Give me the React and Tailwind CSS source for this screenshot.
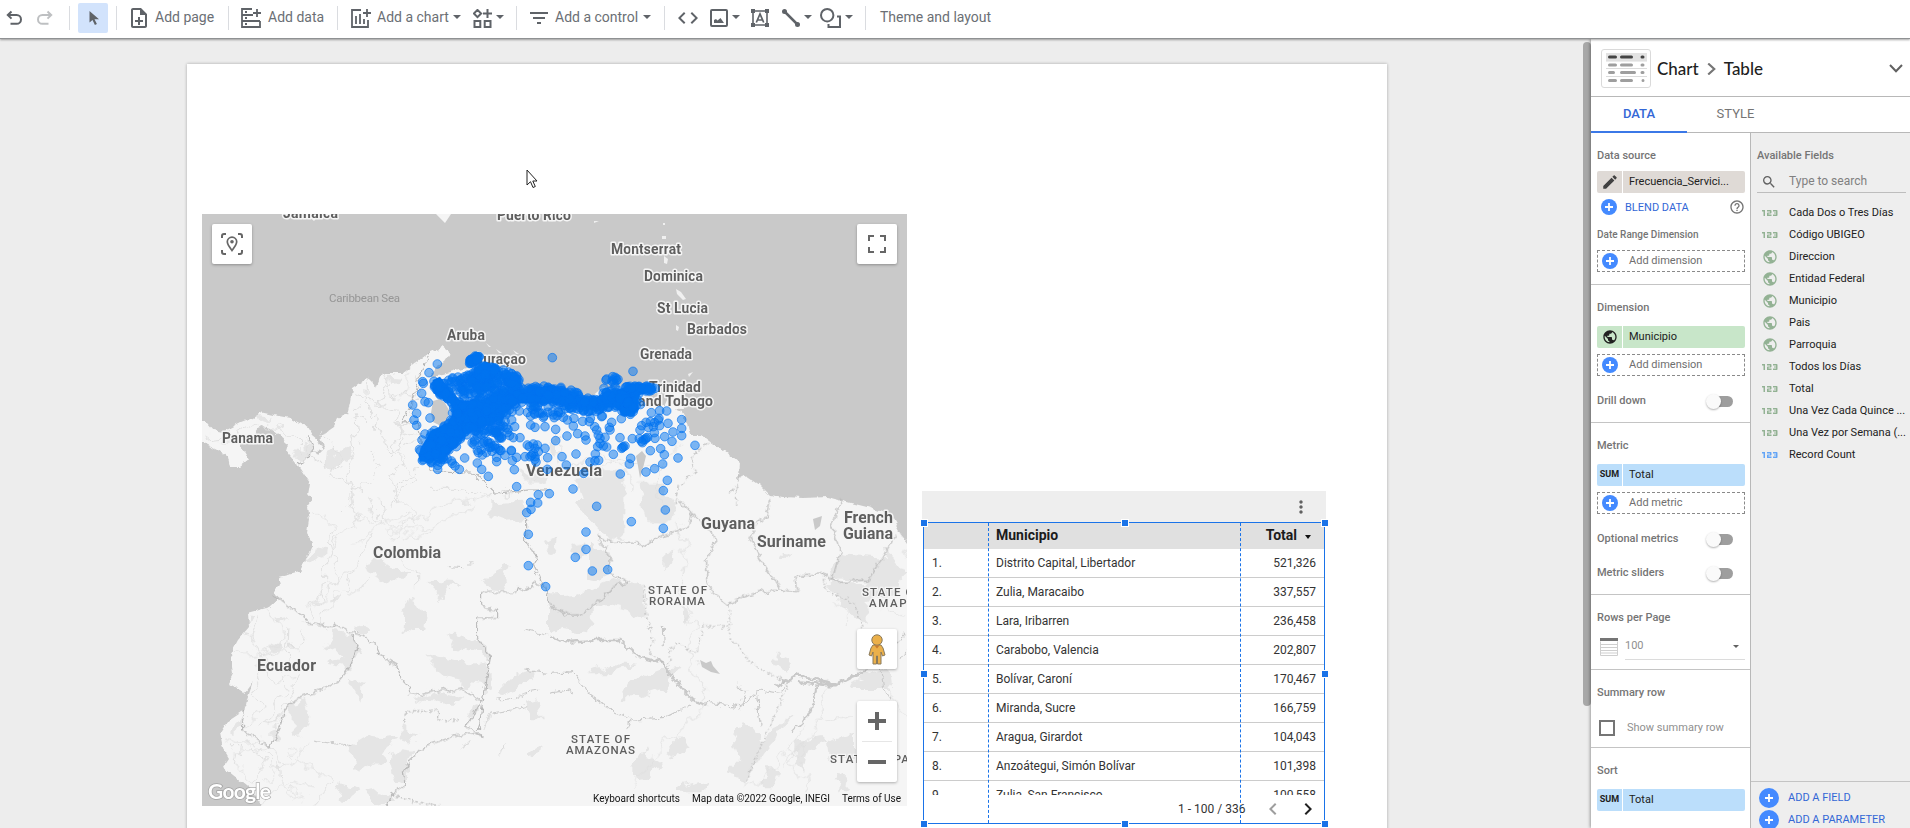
import React from "react";
import { MdEdit, MdPublic, MdHelpOutline, MdSearch, MdFilterList, Md123, MdMoreVert, MdChevronLeft, MdChevronRight, MdCode, MdOutlineNoteAdd } from "react-icons/md";

const ICON = "#5f6368";

/* ---------- Toolbar ---------- */

function Sep({ className = "" }) {
  return <span className={"h-6 w-px shrink-0 bg-[#dadce0] " + className} />;
}

function Caret({ className = "" }) {
  return (
    <svg className={"-mt-[3px] h-1 w-2 shrink-0 " + className} viewBox="0 0 8 4">
      <path d="M0 0h8L4 4z" fill={ICON} />
    </svg>
  );
}

function ToolLabel({ className, children }) {
  return <span className={"shrink-0 pb-[2px] whitespace-nowrap text-[14px] leading-5 text-[#6b6f75] " + className}>{children}</span>;
}

function Svg({ className, viewBox, children }) {
  return (
    <svg className={"shrink-0 " + className} viewBox={viewBox} fill="none" stroke={ICON} strokeWidth="2">
      {children}
    </svg>
  );
}

function Toolbar() {
  return (
    <header className="relative z-20 flex h-[39px] shrink-0 items-start border-b border-[#8f9193] bg-white shadow-[0_1px_2px_rgba(0,0,0,0.35)]">
      <div className="flex h-9 w-full items-center">
        <Svg className="ml-[6px] h-4 w-4" viewBox="0 0 16 16">
          <path d="M5.500 1.500 1.800 5l3.700 3.600M2 5h8.600a4.300 4.300 0 0 1 0 8.800H4.500" />
        </Svg>
        <Svg className="ml-[15px] h-4 w-4 opacity-40" viewBox="0 0 16 16">
          <path d="M10.500 1.500 14.200 5l-3.700 3.600M14 5H5.400a4.300 4.300 0 0 0 0 8.800h6.100" />
        </Svg>
        <Sep className="ml-4" />
        <span className="ml-2 flex h-[30px] w-[30px] shrink-0 items-center justify-center rounded-[2px] bg-[#d2e3fc]">
          <svg className="ml-[2px] h-4 w-[10px]" viewBox="0 0 10 16">
            <path d="M.5 1v11.600l3-2.600 2.400 5 2-.9-2.400-4.900H10z" fill={ICON} />
          </svg>
        </span>
        <Sep className="ml-2" />
        <MdOutlineNoteAdd className="ml-[10px] h-6 w-6 shrink-0 text-[#5f6368]" />
        <ToolLabel className="ml-1 w-[73px]">Add page</ToolLabel>
        <Sep />
        <Svg className="ml-[12px] h-5 w-5" viewBox="0 0 20 20">
          <path d="M11 1H1v18h18v-6M1 7h11M1 13h18M16 1v8M12 5h8M4 4h2M4 10h2M4 16h2" strokeWidth="1.800" />
        </Svg>
        <ToolLabel className="ml-[7px] w-[69px]">Add data</ToolLabel>
        <Sep />
        <Svg className="ml-[13px] h-5 w-5" viewBox="0 0 20 20">
          <path d="M10 2H1v17h16v-7M5 8v8M9 6v10M13 11v5M16 1v8M12 5h8" strokeWidth="1.800" />
        </Svg>
        <ToolLabel className="ml-[6px] w-[76px]">Add a chart</ToolLabel>
        <Caret />
        <Svg className="ml-[12px] h-[19px] w-[19px]" viewBox="0 0 19 19">
          <path d="M4.500.9 8.100 4.500 4.500 8.100.9 4.500zM14.500 0v9M10 4.500h9M1.500 12h5.800v6H1.500zM11.700 12h5.800v6h-5.800z" />
        </Svg>
        <Caret className="ml-1" />
        <Sep className="ml-[12px]" />
        <MdFilterList className="ml-[10px] h-6 w-6 shrink-0 text-[#5f6368]" />
        <ToolLabel className="ml-1 w-[88px]">Add a control</ToolLabel>
        <Caret />
        <Sep className="ml-[13px]" />
        <MdCode className="ml-[11px] h-6 w-6 shrink-0 text-[#5f6368]" />
        <Svg className="ml-[10px] h-[18px] w-[18px]" viewBox="0 0 18 18">
          <rect x="1" y="1" width="16" height="16" rx="1" />
          <path d="M4 14v-3l2-1 1.500 1.500L10.500 9l3.500 5z" fill={ICON} stroke="none" />
        </Svg>
        <Caret className="ml-1" />
        <Svg className="ml-[11px] h-[18px] w-[18px]" viewBox="0 0 18 18">
          <path d="M2 2h14v14H2z" strokeWidth="1.600" />
          <path d="M0 0h4v4H0zM14 0h4v4h-4zM0 14h4v4H0zM14 14h4v4h-4z" fill={ICON} stroke="none" />
          <path d="M5.300 13.500 9 4.800l3.700 8.700M6.500 11h5" strokeWidth="1.700" />
        </Svg>
        <Svg className="ml-[13px] h-[18px] w-[18px]" viewBox="0 0 18 18">
          <path d="m2.500 2.500 13 13" strokeWidth="2.500" />
          <circle cx="2.500" cy="2.500" r="2.500" fill={ICON} stroke="none" />
          <circle cx="15.500" cy="15.500" r="2.500" fill={ICON} stroke="none" />
        </Svg>
        <Caret className="ml-1" />
        <Svg className="ml-2 h-5 w-[21px]" viewBox="0 0 21 20">
          <circle cx="7.200" cy="7.200" r="6.200" />
          <path d="M17 8.500h3V19H8.500v-3" />
        </Svg>
        <Caret className="ml-1" />
        <Sep className="ml-3" />
        <ToolLabel className="ml-[14px]">Theme and layout</ToolLabel>
      </div>
    </header>
  );
}

/* ---------- Map ---------- */

const LAND =
  "M195 423 207 423 213 430 223 432 240 423 253 418 260 412 273 415 290 418 307 427 312 435 318 440 323 450 316 451 311 444 318 455 325 448 320 437 333 428 338 418 347 415 350 402 352 388 367 378 372 383 377 387 383 373 403 373 430 352 442 347 451 353 445 362 435 368 430 377 443 375 467 368 473 358 480 358 490 368 510 368 520 382 518 391 530 388 550 385 570 393 590 398 603 387 617 387 637 385 660 387 650 392 637 405 665 405 682 413 687 422 690 435 702 435 710 441 727 453 739 463 738 477 745 475 760 485 770 495 783 497 803 498 827 497 843 501 867 507 883 512 893 520 900 533 907 543 915 548 915 815 262 815 262 806 252 790 233 775 223 767 229 758 223 748 220 733 227 722 245 710 247 700 253 682 245 693 228 683 233 673 230 655 238 640 249 627 248 613 270 607 280 598 273 593 281 585 279 577 300 572 307 557 313 543 307 533 309 520 307 507 312 500 308 495 310 483 300 468 295 462 285 450 287 443 278 435 270 428 260 425 253 435 245 438 240 445 249 460 240 467 229 467 227 457 217 450 203 443 195 443z";

/* Isolated places, in thirds of a pixel from the north-west corner of the bubble layer */
const PLACES = [
  [112,72],[87,98],[68,125],[70,130],[65,160],[75,185],[85,188],[38,195],[50,220],[42,240],[50,256],[90,234],[75,282],[66,300],
  [457,53],[699,94],[845,239],[845,265],[845,287],[819,276],[816,304],[794,290],[885,316],[834,354],[788,372],[793,344],[782,326],[751,332],[738,396],[764,386],[802,421],[790,452],[796,510],[790,565],[694,545],[590,499],[661,402],[519,447],[558,576],[558,628],[526,652],[577,693],[623,689],[437,740],[385,677],[385,583],[380,518],[393,508],[413,489],[392,487],[415,464],[448,461],[350,440],[265,409],[245,388],[232,369],[194,354],[178,388],[165,378],[157,370],[113,388],[113,376],[343,389],[337,362],[350,352],[334,331],[340,293],[360,293],[344,260],[358,213],[335,240],[235,338],[247,345],[222,313],[272,322],[290,365],[290,352],[303,332],[315,346],[276,334],[268,322],[300,293],[270,270],[288,278],[318,262],
  [375,350],[388,320],[400,312],[405,325],[400,340],[405,350],[415,335],[435,325],[390,350],[408,366],[395,346],[412,315],[405,358],[382,315],[334,333],[443,353],[442,388],[486,350],[499,375],[528,342],[551,400],[501,288],[467,302],[467,268],[435,260],[405,262],[392,255],[392,228],[430,232],[460,225],[490,232],[502,240],[522,235],[520,258],[548,244],[533,281],[555,288],[558,300],[568,245],[571,235],
  [590,270],[595,285],[600,295],[615,292],[593,320],[610,318],[620,321],[586,342],[585,362],[570,366],[596,361],[640,343],[665,325],[670,320],[675,318],[668,322],[692,355],[688,372],[660,293],[630,270],[635,247],[628,262],[605,230],[607,228],[664,236],[697,296],[718,296],[725,304],[731,300],[736,298],[738,294],[727,308],[743,292],[765,295],[763,278],[725,257],[738,247],[751,245],[764,248],[775,240],[779,212],[800,213],[754,218],[804,250],[779,257],[777,235],[745,262],[760,260],[640,120],[648,115],[642,128],[650,122],[645,112],[636,124],[654,118],[620,117],[618,120],[638,110],[612,145],[618,158],[645,140],[711,178],[720,270],[584,260],[600,310],
  [285,130],[205,139],[165,125],[180,120],[150,128],[310,90],[320,104],[300,120],[190,165],[230,140],[215,125],
];

/* Crowded regions: x1, y1, x2, y2, spread, number of places */
const CROWDS = [
  [72,345,130,300,22,70],[125,300,200,220,48,170],[200,240,330,175,46,220],[115,130,145,180,20,60],
  [330,165,430,165,26,90],[430,158,520,175,26,110],[520,190,600,200,22,70],[600,180,700,175,30,105],
  [682,144,765,146,8,36],[683,205,690,200,20,50],[212,66,232,54,9,36],[160,135,330,120,34,125],
  [240,98,280,90,18,70],[335,115,345,125,16,40],[105,355,150,345,20,24],[210,290,310,260,38,50],
  [390,212,520,215,20,26],[245,300,280,320,36,10],
];

function buildCrowds() {
  let seed = 20221;
  const rnd = () => {
    seed = (seed * 16807) % 2147483647;
    return seed / 2147483647;
  };
  const out = [];
  CROWDS.forEach(([x1, y1, x2, y2, s, n]) => {
    for (let i = 0; i < n; i++) {
      const t = rnd();
      const a = rnd() * Math.PI * 2;
      const r = Math.sqrt(rnd()) * s;
      const x = x1 + (x2 - x1) * t + Math.cos(a) * r;
      const y = y1 + (y2 - y1) * t + Math.sin(a) * r;
      if (Math.hypot(x - 110, y - 212) > 48) out.push([x, y]);
    }
  });
  return out;
}
const CROWD_POINTS = buildCrowds();

function Dot({ p }) {
  return <circle cx={p[0]} cy={p[1]} r="13" />;
}

function Place({ x, y, w, size = 14, children }) {
  return (
    <text x={x} y={y} fontSize={size} fontWeight="700" textLength={w} fill="#5e5e5e" stroke="#f5f5f5" strokeWidth="3" strokeLinejoin="round" paintOrder="stroke">
      {children}
    </text>
  );
}

function Region({ x, y, w, children }) {
  return (
    <text x={x} y={y} fontSize="11.500" fontWeight="500" textLength={w} fill="#5e5e5e" stroke="#f5f5f5" strokeWidth="2.500" paintOrder="stroke">
      {children}
    </text>
  );
}

function Rough({ id, freq, scale }) {
  return (
    <filter id={id} filterUnits="userSpaceOnUse" x="202" y="214" width="705" height="592" colorInterpolationFilters="sRGB">
      <feTurbulence type="fractalNoise" baseFrequency={freq} numOctaves="3" seed="7" />
      <feDisplacementMap in="SourceGraphic" scale={scale} xChannelSelector="R" yChannelSelector="G" />
    </filter>
  );
}

function MapDrawing() {
  return (
    <svg className="block h-full w-full" viewBox="202 214 705 592" fontFamily="Roboto, sans-serif">
      <defs>
        <Rough id="coast" freq="0.12" scale="6" />
        <Rough id="patch" freq="0.07" scale="16" />
        <Rough id="road" freq="0.06" scale="24" />
        <Rough id="border" freq="0.14" scale="8" />
      </defs>
      <rect x="202" y="214" width="705" height="592" fill="#c9c9c9" />
      <g filter="url(#coast)">
        <path d={LAND} fill="#f5f5f5" />
        <path d="M665 390 682 388 684 410 664 409 668 400z" fill="#f5f5f5" />
      </g>
      <path d="M436 214h15l-6 9zM306 214h14l-6 7z" fill="#f5f5f5" />
      <path
        d="m664 256 4 3-1 5-3-1zM676 289l5 3 5 7-3 1-6-6zM676 325l3 2-1 4-2-1zM688 374l5-2-4 5zM594 221l5 0-5 2zM663 223h2v2h-2zM662 236h4v3h-4zM640 229l3 1zM486 343l5 4-2 0zM496 349l6 4-3 0zM513 350l6 4-3 0zM582 381l4 1z"
        fill="#f0f0f0"
      />

      {/* Forest and reserve patches */}
      <g fill="#e5e5e5" filter="url(#patch)">
        <g transform="translate(190 205) scale(.33333)">
          <path d="m410 745 20-15 15 15 35-10 12 25-35 10-25 25-25-10zM590 515l60 3-20 18-35 5zM295 735l40 5 25-30 10 25-30 30-30-5zM205 630l40 5-35 20zM510 705l10 5-5 8z" />
        </g>
        <g transform="translate(190 500) scale(.33333)">
          <path d="M895 10 1000 5 1012 60 950 65 895 45zM530 190l50-12 10 20 70 22-60 25-60-25zM712 242l95 4-50 54zM640 340l15-50 20 10 15 30 18 10-5 50-35 0-30-5zM890 225l60-30-12 30 10 55-45-3-20-30zM365 145l40 5-5 35-40-10zM775 395l70 25 50 20 10 35-60-15-50-15zM712 460l60 15 70 15 60-10 0 80-90-10-70-15zM480 380l40-15 25 30-50 5zM430 395l55 10 20 50-25 50-70-15 50-20-15-35-45 20 20-30zM470 530l50 20-2 55-25-40zM665 595l90-25 65 20-25 25-100-15zM305 610l40-10 20 60-30 45-30 5zM480 740l60-35 60 5 30-5-50 70-90 38zM600 780l25-35 38 5-20 80-25 15zM635 685l50 15-20 30-30-12zM920 580l60-60 50-10-50 60-50 18zM1005 605l40-10 10 60-25 0zM1015 760l40-25-5 25-30 15zM450 850l50 15-40 50-20-10zM520 880l60-10 30 40-30 8-30-8zM120 690l45-45-5 25-35 30zM180 350h20l-10 30zM255 350l30-5-10 25zM235 440l30-15-5 30-25 5zM420 310l35-25-15 25zM840 610l25 15-15 30-15-10zM245 690l25-5-5 25-22 5z" />
        </g>
        <g transform="translate(550 500) scale(.33333)">
          <path d="M75 0 130 0 215 20 220 110 165 110 125 70 80 20zM270-10h90l30 40-50 40-45-40zM120 130l60 20 5 60-25 30-40-10zM0 290l80-5 110-45 90 20 10 90-100-30-60 5-10 75-80-10-40 10zM210 560l100-45 85-15-50 65-80 30-50 0zM120 520l60-25 80 5-80 20zM340 760l50-55 35 35-50 35zM250 800l30-45 50 30-40 45-40 5zM580 660l50 60 100-70-80 100-60 90-65-20 40-40-20-50zM670 490l15-45 25 35 5 30-25 10zM740 720l60-15 30 25-50 20-15 65-30-30zM830 720l85-25 0 75-80 0zM860 810l40 50-20 15-35-40zM640 805l45 0-10 60-30 0zM390 860l80-20-10 40-70-5zM830 260l20-20 90 10 70-80 0-20 60 80-60 60-60 10 0 90-60-60zM845 210l30-50 130 10 5 20-50 50-110-5zM900 540l110-40 10 70-110 0zM340 160l25-5 5 30-30 35zM390 330l30 5-15 40zM690 160l25 5-15 15z" />
        </g>
        <g transform="translate(400 340) scale(.33333)">
          <path d="M345 390l40 20 30-10 30 10-20 20-55 0zM445 290l30 0-5 50-20 0zM525 415l80-25 65 0 0 190-40 30-60-70zM715 430l60 0 60 90-20 30-70-5zM430 600l40-5-5 35-15 5zM515 610l40-5 5 35-30 15z" />
        </g>
      </g>

      {/* Roads */}
      <g fill="none" stroke="#dfdfdf" strokeWidth="3" strokeLinejoin="round" filter="url(#road)">
        <g transform="translate(190 205) scale(.33333)">
          <path d="m50 700 90-10 60-30 60 10 40 20 40 50M490 560l35 10 45 30 20-50 25-30M530 530l-5 60 40 60 10 60 60 30 60-40M580 510l25 60 60 10 40-60M555 600l60 10 20 60 60 30M690 520l-30 80-20 80-50 60M510 600l-20 80 10 60-30 60 20 100M540 740l30 50-60 60-60 50M575 700l60 60-30 60 20 70M690 560l-40 90-15 30M640 690l-20 70 60 60-70 60M690 780l-60 50-40 70M400 690l50 60-20 60 60 40-10 50M720 850l90 0 200 20M480 640l60 10M350 700l15 60 50 40" />
        </g>
        <g transform="translate(190 500) scale(.33333)">
          <path d="M480 0l30 60-70 50-30 80 0 70-60 80M370 30l60 50-10 60M570 0l10 70 60 30 90-20 120-70M530 110l-40 100-90 60-50 90M580 80l-60-30-50 40M620 0l60 40-60 70M540 0l30 70-70 60M580 70l70-20 30 30M450 110l-30 60 30 50-30 60-80 60M500 200l-40 80-60 50 10 60M230 330l60 80-90 50-70 5M200 350l-20 60 40 70-25 70M345 390l-20 60-100 0M300 390l-15 180-60 100M320 520l-40 120-70 40M200 470l60 70 50-10M190 560l20 60-50 60M210 680l80-40M110 710l60 20 60-10 50 70-60 60M140 730l-10 60 60 60 30-50-40-80M200 720l50 90 50-30 60-60M260 780l10 60 70 60M130 750l100 0M300 770l60 40 70 30-50 70M220 900l80-50 60 10M540 220l-20 40-60 30M640 180l40 40 0 40" />
        </g>
        <g transform="translate(550 500) scale(.33333)">
          <path d="M380 60l30 120-20 100 40 90-10 80 40 100 0 60M830 550l-20 120-40 60-80 80M1071 640l-60-60M770 680l-130 150-70 30M700 740l60 100 10 70M480 620l-130 100-100 150M820 670l80-20M860 310l40 60M1000 330l71 20M1050 100l20 60" />
        </g>
        <g transform="translate(400 340) scale(.33333)">
          <path d="M0 560 120 500 270 460M0 600l100-30M30 100l-30 80M390 420l130-40 130-20 140 20M420 330l20 90M480 280v80M590 330l100 60 0 80M850 300l-80 80 0 120" />
        </g>
      </g>

      {/* Rivers and lakes */}
      <g fill="none" stroke="#c9c9c9" strokeWidth="3.500" filter="url(#border)">
        <g transform="translate(550 500) scale(.33333)">
          <path d="M210 418l50 50 80 22 40 60 50 50 40 15M0 410l60 15 80-5 70 0" strokeWidth="7" />
          <path d="M680 560l60-35 90 20 30 8 40-20 50-20M750 545l80 10 30 0" strokeWidth="9" />
          <path d="M800 555l-15 80-60 60" strokeWidth="6" />
          <path d="M0 520l70-5 50 70 70 50 60 25 90-5 80-40M470 610l100 10 60-50 60 10 50-60M560 555l30 15-20 60M990 500l10 60 20 40M620 590l10 80M230 690l10-30M0 580l50-10 20 10M340 380l3 60M1040 430l30-30M1050 480l20-30" />
        </g>
        <g transform="translate(190 500) scale(.33333)" strokeWidth="3">
          <path d="M370 720l110 20M775 200l50 3M845 180l-5 15M920 600l60-5 30-20 40-5M880 690l20-50 60-10 50-10M815 745l25-25M925 770l20-40M1000 390l70 15M1000 510l70 10" />
        </g>
      </g>
      <path d="m700 660 6 3 5-2 2 5 7 8-9-2-9-5zM636 456l6-5 4 5-3 12-3 10-2-12zM813 519l9-3-2 10-5 4z" fill="#c9c9c9" />
      <path d="m433 401 7-2 5 4 4 7-1 7-3 6-6 2-6-3-2-9z" fill="#c9c9c9" />

      {/* Country borders */}
      <g fill="none" stroke="#b4b4b4" strokeWidth="3.200" strokeLinejoin="round" filter="url(#border)">
        <g transform="translate(190 205) scale(.33333)">
          <path d="M720 440l-35 80-20 80-30 50 50 0 10 70 30 80 130 5 60 60 100-10 60 0M360 690l10 50-30 30-20 10" />
        </g>
        <g transform="translate(190 500) scale(.33333)">
          <path d="M250 285l60 45 40 25 5 15 70 10 10-12 45 30 40 8 40 35 10 25 50 30 15 40 20 20 5 25 30 5 70-20 20 10 40-8 55 35-45 75 50 30-30-10-60 10-60 20-25 15-45 35-20 40 5 35-40 30-15 45M485 405l18 40-25 60-30 35-50 30-85 28-30 35-10 40-35 70-40-30-40-20 0-30 10-40M1010 60l0 70 30 35-10 30 35 70 10 50M875 320l45 10 0 22-60 3 0 55 42 60-37 220M875 320v-43h105l5-15 20 10 30-25 30 10" />
          <path d="M605 880l60 22 80 15M640 670l10-35 50 0 40-8 10 30 60 5" strokeDasharray="8 5" />
        </g>
        <g transform="translate(550 500) scale(.33333)">
          <path d="M0 315l50 30 40 0 60-45 40-40 45-15-55-25 0-50-40-65 50 25 70-5 20 15 50-30 70-20 20-20 5-30-40-40M425 40l60 50 10 40-25 50 0 60 20 40 45 35 40-25 60-15 50-5 60 5M690 265l-60-90-30-60 20-50 30-10 10-50M740 270l-5-40 80-10 40 25 100-5 80-130M845 245l25-90-25-80 30-80" />
          <path d="M538 315v75l15 40 50 60 90 50 20 20-125 280M355 500l5-50 20-20 20 5 15 20 25 0 20-75h80M280 255l15 110 15 60-15 30 50 40M820 220l10 50 80 40 20 40 10 60" strokeDasharray="7 7" />
        </g>
        <g transform="translate(550 205) scale(.33333)">
          <path d="M475 715l-50 35 10 50-50 40-10 60M565 815l-5 30-25 25M560 850l0 50M660 880l-5 20" strokeDasharray="14 8" />
        </g>
      </g>

      <text x="329" y="302" fontSize="11.500" textLength="71" fill="#969696">Caribbean Sea</text>
      <Place x={283} y={218} w={55}>Jamaica</Place>
      <Place x={497} y={220} w={74}>Puerto Rico</Place>
      <Place x={611} y={254} w={70}>Montserrat</Place>
      <Place x={644} y={281} w={59}>Dominica</Place>
      <Place x={657} y={313} w={51}>St Lucia</Place>
      <Place x={687} y={334} w={60}>Barbados</Place>
      <Place x={640} y={359} w={52}>Grenada</Place>
      <Place x={649} y={392} w={52}>Trinidad</Place>
      <Place x={638} y={406} w={75}>and Tobago</Place>
      <Place x={447} y={340} w={38}>Aruba</Place>
      <Place x={474} y={364} w={52}>Curaçao</Place>
      <Place x={222} y={443} w={51}>Panama</Place>
      <Place x={526} y={476} w={76} size={16}>Venezuela</Place>
      <Place x={373} y={558} w={68} size={16}>Colombia</Place>
      <Place x={257} y={671} w={59} size={16}>Ecuador</Place>
      <Place x={701} y={529} w={54} size={16}>Guyana</Place>
      <Place x={757} y={547} w={69} size={16}>Suriname</Place>
      <Place x={844} y={523} w={49} size={16}>French</Place>
      <Place x={843} y={539} w={50} size={16}>Guiana</Place>
      <Region x={648} y={594} w={59}>STATE OF</Region>
      <Region x={649} y={605} w={56}>RORAIMA</Region>
      <Region x={571} y={743} w={59}>STATE OF</Region>
      <Region x={566} y={754} w={69}>AMAZONAS</Region>
      <Region x={862} y={596} w={59}>STATE OF</Region>
      <Region x={869} y={607} w={46}>AMAPÁ</Region>
      <Region x={830} y={763} w={96}>STATE OF PARÁ</Region>

      <g transform="translate(400 340) scale(.33333)">
        <path
          d="M55 345 65 320 95 270 145 250 162 215 150 190 100 160 98 120 120 110 150 150 180 180 240 185 300 165 340 145 400 150 445 135 500 150 530 170 570 180 610 162 680 142 700 130 765 137 768 153 720 165 708 210 670 220 640 198 570 205 500 190 420 190 330 190 310 235 230 270 200 280 150 340 100 362 60 365z"
          fill="#0073f0"
        />
        <g fill="#0073f0" fillOpacity=".5" stroke="#0073f0" strokeOpacity=".75" strokeWidth="2.500">
          {CROWD_POINTS.map((p, i) => (
            <Dot key={i} p={p} />
          ))}
          {PLACES.map((p, i) => (
            <Dot key={i} p={p} />
          ))}
        </g>
      </g>

      <rect x="590" y="792" width="317" height="14" fill="#f5f5f5" fillOpacity=".7" />
      <g fontSize="10" fill="#111">
        <text x="593" y="802" textLength="87">Keyboard shortcuts</text>
        <text x="692" y="802" textLength="138">Map data ©2022 Google, INEGI</text>
        <text x="842" y="802" textLength="59">Terms of Use</text>
      </g>
      <text x="208" y="799" fontFamily="Lato, sans-serif" fontSize="21" fontWeight="700" textLength="63" fill="#fff" stroke="#8d8d8d" strokeOpacity=".65" strokeWidth="1.500" paintOrder="stroke">
        Google
      </text>
    </svg>
  );
}

const mapButton = "absolute flex h-10 w-10 items-center justify-center rounded-[2px] bg-white shadow-[0_1px_3px_rgba(0,0,0,0.3)]";

function MapChart() {
  return (
    <section className="relative mt-[150px] ml-[15px] h-[592px] w-[705px] shrink-0 overflow-hidden">
      <MapDrawing />
      <div className={mapButton + " top-[10px] left-[10px]"}>
        <svg className="h-[22px] w-[22px]" viewBox="0 0 22 22" fill="none" stroke="#666" strokeWidth="2">
          <path d="M1 5V3a2 2 0 0 1 2-2h2M17 1h2a2 2 0 0 1 2 2v2M21 17v2a2 2 0 0 1-2 2h-2M5 21H3a2 2 0 0 1-2-2v-2" />
          <path d="M11 17.500C8 13.500 6.300 11.500 6.300 8.800a4.700 4.700 0 0 1 9.400 0c0 2.700-1.700 4.700-4.700 8.700z" strokeWidth="1.700" />
          <circle cx="11" cy="8.800" r="1.800" fill="#666" stroke="none" />
        </svg>
      </div>
      <div className={mapButton + " top-[10px] right-[10px]"}>
        <svg className="h-[18px] w-[18px]" viewBox="0 0 18 18" fill="none" stroke="#666" strokeWidth="2">
          <path d="M1 6V1h5M12 1h5v5M17 12v5h-5M6 17H1v-5" />
        </svg>
      </div>
      <div className={mapButton + " top-[415px] right-[10px]"}>
        <svg className="h-[31px] w-[18px]" viewBox="0 0 18 31" fill="#ebb04a" stroke="#8a7a5c" strokeWidth="1">
          <path d="M5 11h8l2 3 2 7-2.500 1L13 18v12H9.500v-8h-1v8H5V18l-1.500 4L1 21l2-7z" />
          <circle cx="9" cy="6" r="5.200" />
          <path d="m6.500 11.500 2.500 3 2.500-3z" fill="#c77b30" stroke="none" />
        </svg>
      </div>
      <div className="absolute top-[487px] right-[10px] flex h-[81px] w-10 flex-col items-center rounded-[2px] bg-white shadow-[0_1px_3px_rgba(0,0,0,0.3)]">
        <div className="flex h-10 items-center">
          <svg className="h-[18px] w-[18px]" viewBox="0 0 18 18">
            <path d="M7 0h4v7h7v4h-7v7H7v-7H0V7h7z" fill="#666" />
          </svg>
        </div>
        <div className="h-px w-[30px] bg-[#e6e6e6]" />
        <div className="flex h-10 items-center">
          <div className="h-1 w-[18px] bg-[#666]" />
        </div>
      </div>
    </section>
  );
}

/* ---------- Data table ---------- */

const ROWS = [
  ["Distrito Capital, Libertador", "521,326"],
  ["Zulia, Maracaibo", "337,557"],
  ["Lara, Iribarren", "236,458"],
  ["Carabobo, Valencia", "202,807"],
  ["Bolívar, Caroní", "170,467"],
  ["Miranda, Sucre", "166,759"],
  ["Aragua, Girardot", "104,043"],
  ["Anzoátegui, Simón Bolívar", "101,398"],
  ["Zulia, San Francisco", "100,558"],
];

function Handle({ className }) {
  return <span className={"absolute h-2 w-2 border border-white bg-[#1a73e8] " + className} />;
}

function TableChart() {
  return (
    <section className="mt-[427px] ml-[15px] w-[404px] shrink-0">
      <div className="flex h-[31px] items-center justify-end bg-[#eeeeee] pr-[15px]">
        <MdMoreVert className="h-5 w-5 text-[#616161]" />
      </div>
      <div className="relative ml-px flex h-[302px] w-[402px] flex-col border border-[#1a73e8] bg-white text-[12px] text-[#333]">
        <div className="flex h-[26px] items-center bg-[#e0e0e0] pb-px text-[14px] font-bold text-[#1b1b1b]">
          <span className="w-[72px]" />
          <span className="flex-1">Municipio</span>
          <span>Total</span>
          <svg className="mt-[2px] mr-[13px] ml-2 h-[4px] w-[6px]" viewBox="0 0 6 4">
            <path d="M0 0h6L3 4z" fill="#111" />
          </svg>
        </div>
        <div className="h-[246px] overflow-hidden">
          {ROWS.map((r, i) => (
            <div key={r[0]} className="flex h-[29px] items-center border-b border-[#cccccc] pr-[8px]">
              <span className="w-16 pl-2">{i + 1}.</span>
              <span className="flex-1 pl-2">{r[0]}</span>
              <span>{r[1]}</span>
            </div>
          ))}
        </div>
        <div className="flex flex-1 items-center justify-end">
          <span className="w-[67px] whitespace-nowrap">1 - 100 / 336</span>
          <MdChevronLeft className="ml-[16px] h-6 w-6 text-[#9e9e9e]" />
          <MdChevronRight className="mr-[4px] ml-[11px] h-6 w-6 text-[#212121]" />
        </div>
        <span className="absolute top-0 bottom-0 left-[64px] border-l border-dashed border-[#1a73e8]" />
        <span className="absolute top-0 bottom-0 left-[316px] border-l border-dashed border-[#1a73e8]" />
        <Handle className="-top-[4px] -left-[4px]" />
        <Handle className="-top-[4px] left-[197px]" />
        <Handle className="-top-[4px] -right-[5px]" />
        <Handle className="top-[147px] -left-[4px]" />
        <Handle className="top-[147px] -right-[5px]" />
        <Handle className="-bottom-[5px] -left-[4px]" />
        <Handle className="-bottom-[5px] left-[197px]" />
        <Handle className="-right-[5px] -bottom-[5px]" />
      </div>
    </section>
  );
}

/* ---------- Properties panel ---------- */

function PlusCircle({ className }) {
  return (
    <span className={"flex shrink-0 items-center justify-center rounded-full bg-[#448aff] text-white " + className}>
      <svg className="h-2 w-2" viewBox="0 0 8 8">
        <path d="M3.100 0h1.800v3.100H8v1.800H4.900V8H3.100V4.900H0V3.100h3.100z" fill="currentColor" />
      </svg>
    </span>
  );
}

function Heading({ className = "", size = "text-[11px]", children }) {
  return <div className={"leading-4 font-medium text-[#757575] " + size + " " + className}>{children}</div>;
}

function Chip({ color, icon, children }) {
  return (
    <div className="flex h-[22px] gap-px overflow-hidden rounded-[2px] text-[11px] text-[#212121]">
      <span className={"flex w-[25px] items-center justify-center " + color}>{icon}</span>
      <span className={"flex flex-1 items-center pl-[6px] " + color}>{children}</span>
    </div>
  );
}

function AddBox({ children }) {
  return (
    <div className="flex h-[22px] items-center border border-dashed border-[#8a8a8a] pl-1 text-[11px] text-[#6f6f6f]">
      <PlusCircle className="h-4 w-4" />
      <span className="ml-[11px]">{children}</span>
    </div>
  );
}

function Toggle() {
  return (
    <span className="mr-3 flex h-[15px] w-[27px] items-center">
      <span className="relative z-10 h-[15px] w-[15px] shrink-0 rounded-full bg-[#fafafa] shadow-[0_1px_2px_rgba(0,0,0,0.3)]" />
      <span className="-ml-2 h-[11px] w-5 shrink-0 rounded-full bg-[#9e9e9e]" />
    </span>
  );
}

function ToggleRow({ className, children }) {
  return (
    <div className={"flex h-4 items-center justify-between " + className}>
      <Heading>{children}</Heading>
      <Toggle />
    </div>
  );
}

function Section({ className, children }) {
  return <div className={"shrink-0 border-b border-[#c4c4c4] pr-[5px] pl-[6px] " + className}>{children}</div>;
}

const SUM = <span className="text-[9px] font-bold">SUM</span>;

const FIELDS = [
  ["n", "Cada Dos o Tres Días"],
  ["n", "Código UBIGEO"],
  ["g", "Direccion"],
  ["g", "Entidad Federal"],
  ["g", "Municipio"],
  ["g", "Pais"],
  ["g", "Parroquia"],
  ["n", "Todos los Días"],
  ["n", "Total"],
  ["n", "Una Vez Cada Quince ..."],
  ["n", "Una Vez por Semana (..."],
  ["b", "Record Count"],
];

function FieldIcon({ kind }) {
  if (kind === "g") return <MdPublic className="h-4 w-4 text-[#93b294]" />;
  return <Md123 className={"-mx-1 h-[24px] w-[24px] shrink-0 " + (kind === "b" ? "text-[#64a5f6]" : "text-[#93b294]")} />;
}

function SetupColumn() {
  return (
    <div className="flex w-[160px] shrink-0 flex-col overflow-hidden border-r border-[#b8b8b8] bg-white">
      <Section className="h-[152px]">
        <Heading className="mt-[15px]">Data source</Heading>
        <div className="mt-[7px]">
          <Chip color="bg-[#dfdad6]" icon={<MdEdit className="h-[18px] w-[18px] text-[#424242]" />}>Frecuencia_Servici...</Chip>
        </div>
        <div className="mt-[6px] flex h-4 items-center pl-1">
          <PlusCircle className="h-4 w-4" />
          <span className="ml-2 flex-1 pt-[3px] text-[11px] text-[#3367d6]">BLEND DATA</span>
          <MdHelpOutline className="h-4 w-4 text-[#757575]" />
        </div>
        <Heading className="mt-3" size="text-[10px]">Date Range Dimension</Heading>
        <div className="mt-[7px]">
          <AddBox>Add dimension</AddBox>
        </div>
      </Section>
      <Section className="h-[138px]">
        <Heading className="mt-[15px]">Dimension</Heading>
        <div className="mt-[10px] flex flex-col gap-[6px]">
          <Chip color="bg-[#c8e6c9]" icon={<MdPublic className="h-4 w-4" />}>Municipio</Chip>
          <AddBox>Add dimension</AddBox>
        </div>
        <ToggleRow className="mt-[17px]">Drill down</ToggleRow>
      </Section>
      <Section className="h-[172px]">
        <Heading className="mt-[15px]">Metric</Heading>
        <div className="mt-[10px] flex flex-col gap-[6px]">
          <Chip color="bg-[#bbdefb]" icon={SUM}>Total</Chip>
          <AddBox>Add metric</AddBox>
        </div>
        <ToggleRow className="mt-[17px]">Optional metrics</ToggleRow>
        <ToggleRow className="mt-[18px]">Metric sliders</ToggleRow>
      </Section>
      <Section className="h-[75px]">
        <Heading className="mt-[15px]">Rows per Page</Heading>
        <div className="mt-[7px] flex pl-[3px]">
          <svg className="mt-[5px] h-[18px] w-[18px]" viewBox="0 0 18 18">
            <path d="M.5 3.500v14h17v-14M0 6.500h18M0 9.500h18M0 12.500h18M0 15h18" fill="none" stroke="#cfcfcf" />
            <path d="M0 0h18v3H0z" fill="#757575" />
          </svg>
          <div className="ml-[7px] flex h-[27px] flex-1 items-center justify-between border-b border-[#dcdcdc] pt-px pr-[6px] text-[11px] text-[#8f8f8f]">
            <span>100</span>
            <svg className="h-[3px] w-[6px]" viewBox="0 0 6 3">
              <path d="M0 0h6L3 3z" fill="#616161" />
            </svg>
          </div>
        </div>
      </Section>
      <Section className="h-[78px]">
        <Heading className="mt-[15px]">Summary row</Heading>
        <div className="mt-[19px] flex items-center pl-[2px]">
          <span className="h-4 w-4 border-2 border-[#757575] bg-white" />
          <span className="ml-[12px] text-[11px] leading-4 text-[#8f8f8f]">Show summary row</span>
        </div>
      </Section>
      <Section className="h-[100px]">
        <Heading className="mt-[15px]">Sort</Heading>
        <div className="mt-[10px]">
          <Chip color="bg-[#bbdefb]" icon={SUM}>Total</Chip>
        </div>
      </Section>
    </div>
  );
}

function FieldsColumn() {
  return (
    <div className="flex flex-1 flex-col bg-[#eeeeee] text-[11px]">
      <div className="flex flex-1 flex-col pr-[5px] pl-[6px]">
        <Heading className="mt-[15px]">Available Fields</Heading>
        <div className="mt-[7px] flex h-[22px] items-center border-b border-[#bdbdbd] pl-1 text-[12px] text-[#808080]">
          <MdSearch className="h-4 w-4 text-[#616161]" />
          <span className="ml-3 pb-[2px]">Type to search</span>
        </div>
        <div className="mt-[9px]">
          {FIELDS.map(([kind, name]) => (
            <div key={name} className="flex h-[22px] items-center text-[#212121]">
              <span className="flex w-[26px] justify-center">
                <FieldIcon kind={kind} />
              </span>
              <span className="ml-[6px] whitespace-nowrap">{name}</span>
            </div>
          ))}
        </div>
      </div>
      <div className="h-[47px] shrink-0 border-t border-[#c4c4c4] pt-[5px] pl-2 text-[#3367d6]">
        <div className="flex h-[22px] items-center">
          <PlusCircle className="h-5 w-5" />
          <span className="ml-[9px]">ADD A FIELD</span>
        </div>
        <div className="flex h-[22px] items-center">
          <PlusCircle className="h-5 w-5" />
          <span className="ml-[9px]">ADD A PARAMETER</span>
        </div>
      </div>
    </div>
  );
}

function PropertiesPanel() {
  return (
    <aside className="relative z-10 flex w-[319px] shrink-0 flex-col bg-white shadow-[-1px_0_3px_rgba(0,0,0,0.35)]">
      <div className="flex h-[58px] shrink-0 items-center border-b border-[#b8b8b8] pt-[2px]">
        <span className="ml-[10px] flex h-[39px] w-[50px] items-center justify-center rounded-[3px] border border-[#dadada]">
          <svg className="h-[31px] w-[41px]" viewBox="0 0 41 31">
            <path d="M0 0h41v8H0z" fill="#e3e3e3" />
            <path d="M0 8h41M0 15.500h41M0 23.500h41" stroke="#dcdcdc" />
            <g strokeWidth="3" strokeLinecap="round">
              <path d="M3.500 4h6M15.500 4h10M36 4h1" stroke="#444" />
              <path d="M3.500 12h6M15.500 12h10M36 12h1M3.500 19.500h4M15.500 19.500h13M36 19.500h1M3.500 27.500h6M15.500 27.500h10M37 27.500h0" stroke="#9e9e9e" />
            </g>
          </svg>
        </span>
        <span className="ml-[6px] font-['Lato',sans-serif] text-[17px] font-medium text-[#212121]">Chart</span>
        <svg className="mr-2 ml-2 h-[12px] w-[9px]" viewBox="0 0 8 11">
          <path d="m1 .5 5.500 5L1 10.500" fill="none" stroke="#757575" strokeWidth="2" />
        </svg>
        <span className="flex-1 font-['Lato',sans-serif] text-[17px] font-medium text-[#212121]">Table</span>
        <svg className="mr-[7px] h-[9px] w-[14px]" viewBox="0 0 14 9">
          <path d="m1 1 6 6.200L13 1" fill="none" stroke="#616161" strokeWidth="2" />
        </svg>
      </div>
      <div className="flex h-9 shrink-0 border-b border-[#b8b8b8] text-[13px]">
        <span className="flex h-9 w-24 items-center justify-center border-b-2 border-[#3b78e7] font-medium text-[#3367d6]">DATA</span>
        <span className="flex h-9 w-[97px] items-center justify-center pb-[2px] text-[#757575]">STYLE</span>
      </div>
      <div className="flex min-h-0 flex-1">
        <SetupColumn />
        <FieldsColumn />
      </div>
    </aside>
  );
}

export default function App() {
  return (
    <div className="flex h-[828px] w-[1910px] flex-col overflow-hidden bg-[#ededed] font-['Roboto',sans-serif]">
      <Toolbar />
      <div className="flex min-h-0 flex-1">
        <main className="relative min-w-0 flex-1 overflow-hidden pt-[25px] pl-[187px]">
          <div className="flex h-[900px] w-[1200px] items-start bg-white shadow-[0_0_3px_rgba(0,0,0,0.3)]">
            <MapChart />
            <TableChart />
          </div>
          <svg className="absolute top-[130px] left-[526px] h-5 w-3" viewBox="0 0 12 20">
            <path d="M1 1v15l3.500-3.300L7 18.500l2.300-1-2.500-5.500H11z" fill="#fff" stroke="#222" strokeWidth="1" />
          </svg>
        </main>
        <div className="w-2 shrink-0 pt-[3px]">
          <div className="h-[664px] w-2 rounded-full bg-[#a8a8a8]" />
        </div>
        <PropertiesPanel />
      </div>
    </div>
  );
}
